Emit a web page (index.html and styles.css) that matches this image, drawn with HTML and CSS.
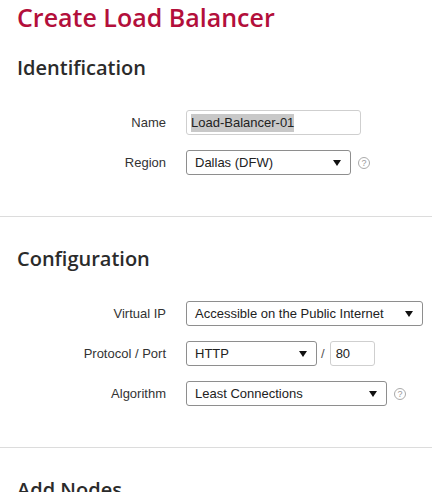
FILE: index.html
```html
<!doctype html>
<html>

<head>
	<title>Create Load Balancer</title>
	<link rel="stylesheet" href="styles.css">
</head>

<body>
	<h1 class="page-title">Create Load Balancer</h1>

	<!-- Identification -->
	<div class="section section-first">
		<h2 class="section-title">Identification</h2>
		<div class="form-rows">
			<div class="form-row">
				<label class="form-label">Name</label>
				<div class="form-field">
					<div class="text-input w-name"><span class="selected">Load-Balancer-01</span></div>
				</div>
			</div>
			<div class="form-row">
				<label class="form-label">Region</label>
				<div class="form-field">
					<div class="select w-region"><span class="select-value">Dallas (DFW)</span><span class="select-arrow"></span></div>
					<span class="help">?</span>
				</div>
			</div>
		</div>
	</div>

	<!-- Configuration -->
	<div class="section">
		<h2 class="section-title">Configuration</h2>
		<div class="form-rows">
			<div class="form-row">
				<label class="form-label">Virtual IP</label>
				<div class="form-field">
					<div class="select w-vip"><span class="select-value">Accessible on the Public Internet</span><span class="select-arrow"></span></div>
				</div>
			</div>
			<div class="form-row">
				<label class="form-label">Protocol / Port</label>
				<div class="form-field">
					<div class="select w-protocol"><span class="select-value">HTTP</span><span class="select-arrow"></span></div>
					<span class="slash">/</span>
					<div class="text-input w-port">80</div>
				</div>
			</div>
			<div class="form-row">
				<label class="form-label">Algorithm</label>
				<div class="form-field">
					<div class="select w-algorithm"><span class="select-value">Least Connections</span><span class="select-arrow"></span></div>
					<span class="help">?</span>
				</div>
			</div>
		</div>
	</div>

	<!-- Add Nodes -->
	<div class="section section-last">
		<h2 class="section-title">Add Nodes</h2>
	</div>
</body>

</html>
```

FILE: styles.css
```css
* { margin: 0; padding: 0; box-sizing: border-box; }
body { background-color: #fff; font-family: 'Liberation Sans', Arial, sans-serif; font-size: 13px; color: #333; overflow: hidden; }
.page-title { margin: 2px 17px 0; font-family: 'Open Sans', sans-serif; font-weight: 600; font-size: 25px; line-height: 30px; color: #b30f3b; }
.section { padding: 28px 17px 41px; border-bottom: 1px solid #dcdcdc; }
.section-first { padding-top: 22px; }
.section-last { border-bottom: none; }
.section-title { font-family: 'Open Sans', sans-serif; font-weight: 600; font-size: 20px; line-height: 28px; color: #2b2b2b; margin-bottom: 28px; }
.form-rows { display: flex; flex-direction: column; gap: 15px; }
.form-row { display: grid; grid-template-columns: 149px 1fr; column-gap: 20px; align-items: center; height: 25px; }
.form-label { text-align: right; color: #333; }
.form-field { display: flex; align-items: center; }
.text-input { height: 25px; border: 1px solid #cfcfcf; border-radius: 3px; padding: 0 4px; display: flex; align-items: center; color: #222; background: #fff; }
.text-input .selected { background-color: #c8c8c8; line-height: 18px; }
.select { position: relative; height: 25px; border: 1px solid #8e8e8e; border-radius: 3px; padding: 0 20px 0 8px; display: flex; align-items: center; color: #222; background: #fff; }
.select-value { white-space: nowrap; }
.select-arrow { position: absolute; right: 9px; top: 9px; width: 0; height: 0; border-left: 4px solid transparent; border-right: 4px solid transparent; border-top: 6px solid #111; }
.help { width: 12px; height: 12px; margin-left: 7px; border: 1px solid #aaa; border-radius: 50%; color: #999; font-size: 9px; line-height: 10px; text-align: center; }
.slash { margin: 0 5px 0 4px; color: #555; }
.w-name { width: 175px; }
.w-region { width: 165px; }
.w-vip { width: 237px; }
.w-protocol { width: 131px; }
.w-port { width: 45px; padding-left: 5px; }
.w-algorithm { width: 201px; }
```
